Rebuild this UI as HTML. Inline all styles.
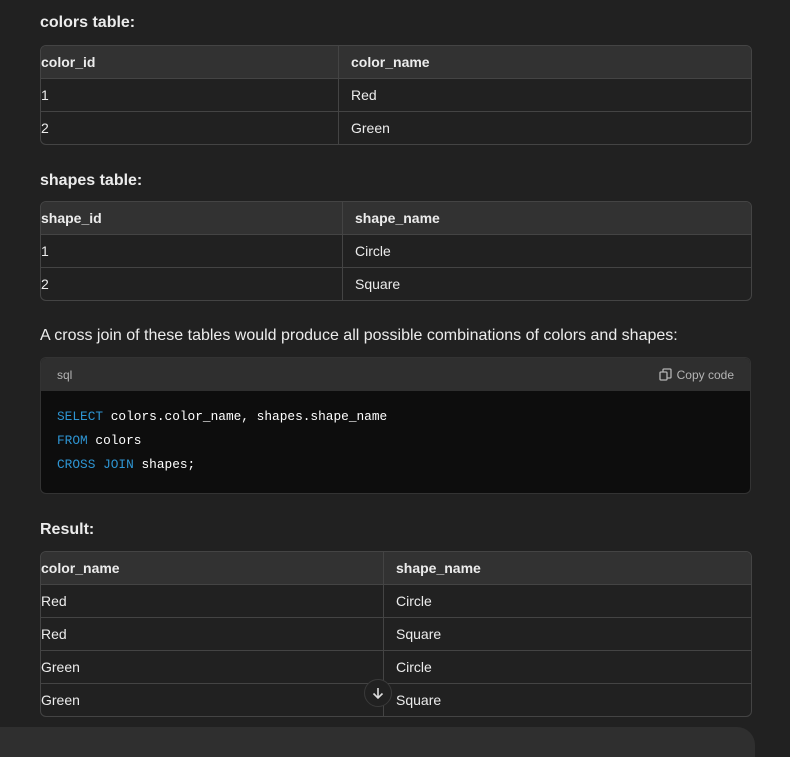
<!DOCTYPE html>
<html><head><style>
body{margin:0;background:#212121;width:790px;height:735px;overflow:hidden;position:relative;font-family:"Liberation Sans",sans-serif;color:#ececec;font-size:14px}
.h{position:absolute;left:40px;font-weight:bold;font-size:16px}
table{position:absolute;left:40px;width:712px;border-collapse:separate;border-spacing:0;border:1px solid #444;border-radius:6px;overflow:hidden}
td,th{height:32px;padding:0;text-align:left;border-bottom:1px solid #444;font-size:14px}
th{background:#323232;font-weight:bold}
tr:last-child td{border-bottom:none}
td:nth-child(2),th:nth-child(2){border-left:1px solid #444;padding-left:12px}
.code{position:absolute;left:40px;top:357px;width:711px;height:137px;border-radius:6px;overflow:hidden;background:#0d0d0d;border:1px solid #333;box-sizing:border-box}
.ch{height:33px;background:#2f2f2f;font-size:12px;color:#b4b4b4;display:flex;align-items:center;justify-content:space-between;padding:0 16px}
pre{margin:0;padding:14px 16px;font-family:"Liberation Mono",monospace;font-size:12.8px;line-height:24px;color:#fff}
.k{color:#2e95d3}
</style></head><body>
<div class="h" style="top:14px">colors table:</div>
<table style="top:45px"><tr><th style="width:297px">color_id</th><th>color_name</th></tr>
<tr><td>1</td><td>Red</td></tr><tr><td>2</td><td>Green</td></tr></table>
<div class="h" style="top:172px">shapes table:</div>
<table style="top:201px"><tr><th style="width:301px">shape_id</th><th>shape_name</th></tr>
<tr><td>1</td><td>Circle</td></tr><tr><td>2</td><td>Square</td></tr></table>
<div style="position:absolute;left:40px;top:327px;font-size:16px">A cross join of these tables would produce all possible combinations of colors and shapes:</div>
<div class="code"><div class="ch"><span>sql</span><span><svg width="13" height="13" viewBox="0 0 13 13" style="vertical-align:-2px;margin-right:5px" fill="none" stroke="#b4b4b4" stroke-width="1.3"><rect x="1" y="4" width="7" height="8" rx="1"/><path d="M4 4V2a1 1 0 0 1 1-1h6a1 1 0 0 1 1 1v7a1 1 0 0 1-1 1H8"/></svg>Copy code</span></div>
<pre><span class="k">SELECT</span> colors.color_name, shapes.shape_name
<span class="k">FROM</span> colors
<span class="k">CROSS JOIN</span> shapes;</pre></div>
<div class="h" style="top:521px">Result:</div>
<table style="top:551px"><tr><th style="width:342px">color_name</th><th>shape_name</th></tr>
<tr><td>Red</td><td>Circle</td></tr><tr><td>Red</td><td>Square</td></tr><tr><td>Green</td><td>Circle</td></tr><tr><td>Green</td><td>Square</td></tr></table>
<div style="position:absolute;left:364px;top:679px;width:26px;height:26px;border-radius:50%;background:#212121;border:1px solid #3a3a3a;display:flex;align-items:center;justify-content:center"><svg width="14" height="14" viewBox="0 0 14 14" fill="none" stroke="#ddd" stroke-width="1.6"><path d="M7 2v10M2.5 7.5 7 12l4.5-4.5"/></svg></div>
<div style="position:absolute;left:0;top:727px;width:755px;height:30px;background:#2f2f2f;border-radius:0 18px 0 0"></div>
</body></html>
